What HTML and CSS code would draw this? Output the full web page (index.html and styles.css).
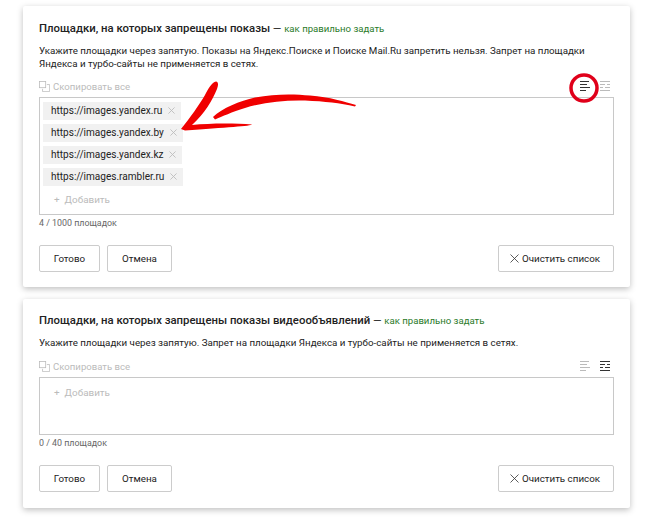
FILE: index.html
```html
<!DOCTYPE html>
<html lang="ru">
<head>
<meta charset="utf-8">
<title>Площадки</title>
<link rel="stylesheet" href="styles.css">
</head>
<body>
<section class="card card-first">
  <h2 class="title"><b>Площадки, на которых запрещены показы</b> — <a class="help">как правильно задать</a></h2>
  <p class="desc">Укажите площадки через запятую. Показы на Яндекс.Поиске и Поиске Mail.Ru запретить нельзя. Запрет на площадки<br>Яндекса и турбо-сайты не применяется в сетях.</p>
  <div class="toolbar">
    <span class="copy"><svg class="copy-icon" viewBox="0 0 14 14"><rect x="0.5" y="0.5" width="8" height="8"/><path d="M10 4.5h3.5v9h-9V10"/></svg>Скопировать все</span>
    <span class="modes">
      <svg class="mode mode-on" viewBox="0 0 12 12"><path d="M1 1.5h9M1 4.500h7M1 7.500h10M1 10.500h6"/></svg>
      <svg class="mode mode-off" viewBox="0 0 12 12"><path d="M1 1.5h10M1 4.500h5M8 4.500h3M1 7.500h3M6 7.500h5M1 10.500h10"/></svg>
    </span>
  </div>
  <div class="box">
    <div class="tag">https://images.yandex.ru<svg class="x" viewBox="0 0 8 8"><path d="M.5.5l7 7M7.5.5l-7 7"/></svg></div>
    <div class="tag">https://images.yandex.by<svg class="x" viewBox="0 0 8 8"><path d="M.5.5l7 7M7.5.5l-7 7"/></svg></div>
    <div class="tag">https://images.yandex.kz<svg class="x" viewBox="0 0 8 8"><path d="M.5.5l7 7M7.5.5l-7 7"/></svg></div>
    <div class="tag">https://images.rambler.ru<svg class="x" viewBox="0 0 8 8"><path d="M.5.5l7 7M7.5.5l-7 7"/></svg></div>
    <div class="add"><span class="plus">+</span>Добавить</div>
  </div>
  <div class="count">4 / 1000 площадок</div>
  <div class="actions">
    <button class="btn btn-done">Готово</button>
    <button class="btn btn-cancel">Отмена</button>
    <button class="btn btn-clear"><svg class="clear-x" viewBox="0 0 9 9"><path d="M.5.5l8 8M8.5.5l-8 8"/></svg>Очистить список</button>
  </div>
</section>
<section class="card card-second">
  <h2 class="title"><b>Площадки, на которых запрещены показы видеообъявлений</b> — <a class="help">как правильно задать</a></h2>
  <p class="desc">Укажите площадки через запятую. Запрет на площадки Яндекса и турбо-сайты не применяется в сетях.</p>
  <div class="toolbar">
    <span class="copy"><svg class="copy-icon" viewBox="0 0 14 14"><rect x="0.5" y="0.5" width="8" height="8"/><path d="M10 4.5h3.5v9h-9V10"/></svg>Скопировать все</span>
    <span class="modes">
      <svg class="mode mode-off" viewBox="0 0 12 12"><path d="M1 1.5h9M1 4.500h7M1 7.500h10M1 10.500h6"/></svg>
      <svg class="mode mode-on" viewBox="0 0 12 12"><path d="M1 1.5h10M1 4.500h5M8 4.500h3M1 7.500h3M6 7.500h5M1 10.500h10"/></svg>
    </span>
  </div>
  <div class="box">
    <div class="add"><span class="plus">+</span>Добавить</div>
  </div>
  <div class="count">0 / 40 площадок</div>
  <div class="actions">
    <button class="btn btn-done">Готово</button>
    <button class="btn btn-cancel">Отмена</button>
    <button class="btn btn-clear"><svg class="clear-x" viewBox="0 0 9 9"><path d="M.5.5l8 8M8.5.5l-8 8"/></svg>Очистить список</button>
  </div>
</section>
<svg class="marks" viewBox="0 0 647 522">
  <path class="ink" d="M216 81.500C218.500 82 218.500 85 217 89C212 101 205 113 192 125C210 123 235 123 252 124.500C252 126 225 127.500 185 130.500L181 129C190 118 199 105 205 95C208 89 212 82 216 81.500Z"/>
  <path class="ink" d="M213 117C222 108 240 101 255 97.500C275 93.500 295 94 310 95.500C330 97 345 102 356 105L355 106.500C340 103 325 101.500 305 100.500C285 100 265 102 245 108C232 112 222 116.500 215 119.500Z"/>
  <circle class="ring" cx="584" cy="88" r="13"/>
</svg>
</body>
</html>
```

FILE: styles.css
```css
* { box-sizing: border-box; }
html, body { margin: 0; padding: 0; }
body {
  background: #fff;
  width: 647px;
  height: 522px;
  overflow: hidden;
  padding: 6px 17px 0 23px;
  font-family: "Roboto", "Noto Sans", sans-serif;
  color: #222;
  position: relative;
}
.card {
  background: #fff;
  padding: 14px 16px 0;
  box-shadow: 0 2px 6px rgba(0,0,0,.25);
  border-radius: 2px;
}
.card-first { height: 281px; }
.card-second { height: 209px; margin-top: 12px; }
.card-second .title { margin-top: -1px; }
.title { margin: 0; font-size: 11px; line-height: 16px; font-weight: 400; }
.title b { font-weight: 500; font-size: 11.35px; }
.help { color: #2a7a2a; font-size: 9.6px; }
.desc { margin: 7px 0 0; font-size: 9.75px; line-height: 13px; }
.toolbar { display: flex; justify-content: space-between; align-items: center; height: 16px; margin-top: 8px; }
.card-second .toolbar { margin-top: 9px; }
.copy { display: flex; align-items: center; gap: 3px; font-size: 9.6px; color: #bbb; }
.copy-icon { width: 11px; height: 11px; fill: none; stroke: #bbb; stroke-width: 1; }
.modes { display: flex; gap: 8px; margin-right: 3px; }
.mode { width: 12px; height: 12px; fill: none; stroke-width: 1.2; }
.mode-on { stroke: #333; }
.mode-off { stroke: #bbb; }
.box { border: 1px solid #c8c8c8; margin-top: 3px; padding: 4px 3px; height: 118px; }
.card-second .box { padding-top: 5px; height: 58px; }
.tag { display: flex; align-items: center; justify-content: space-between; width: max-content; height: 18px; margin-bottom: 4px; padding: 0 6px 1px 8px; background: #f1f1f1; font-size: 10.05px; gap: 6px; }
.x { width: 7px; height: 7px; fill: none; stroke: #bbb; stroke-width: 1; }
.add { font-size: 9.9px; color: #bbb; padding: 4px 11px; }
.plus { margin-right: 5px; }
.count { font-size: 8.9px; color: #666; margin-top: 2px; line-height: 13px; }
.actions { display: flex; gap: 7px; margin-top: 15px; }
.btn { height: 27px; background: #fff; border: 1px solid #ccc; border-radius: 2px; font: inherit; font-size: 9.8px; color: #222; padding: 0; }
.btn-done { width: 61px; }
.btn-cancel { width: 65px; }
.btn-clear { width: 116px; margin-left: auto; display: flex; align-items: center; justify-content: center; gap: 3px; padding-right: 2px; }
.clear-x { width: 9px; height: 9px; fill: none; stroke: #333; stroke-width: .8; }
.marks { position: absolute; left: 0; top: 0; width: 647px; height: 522px; pointer-events: none; }
.ink { fill: #f00000; }
.ring { fill: none; stroke: #e0001a; stroke-width: 3.5; }
```
